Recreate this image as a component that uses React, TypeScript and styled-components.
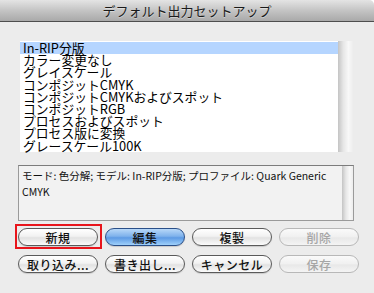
import React from "react";
import styled, { createGlobalStyle, css } from "styled-components";

const GlobalStyle = createGlobalStyle`
  html, body {
    margin: 0;
    padding: 0;
    background: #ffffff;
  }
  body {
    font-family: "Noto Sans CJK JP", "Liberation Sans", sans-serif;
  }
`;

const Window = styled.div`
  width: 374px;
  height: 293px;
  background: #ececec;
  border-radius: 0 5px 0 0;
  overflow: hidden;
  display: flex;
  flex-direction: column;
`;

const TitleBar = styled.div`
  height: 21px;
  border-bottom: 1px solid #4e4e4e;
  background: linear-gradient(#e4e4e4, #c4c4c4 50%, #a9a9a9);
  display: flex;
  align-items: center;
  justify-content: center;
  font-size: 13px;
  line-height: 21px;
  color: #1a1a1a;
  text-shadow: 0 1px 0 rgba(255, 255, 255, 0.4);
`;

const Body = styled.div`
  padding: 19px 20px 0 18px;
  display: flex;
  flex-direction: column;
`;

const ListBox = styled.div`
  margin-left: 2px;
  width: 333px;
  height: 111px;
  display: flex;
  background: #ffffff;
`;

const ListItems = styled.div`
  flex: 1;
  padding-top: 1px;
`;

const ListRow = styled.div<{ $selected?: boolean }>`
  height: 12.2px;
  line-height: 12.2px;
  padding-left: 3px;
  font-size: 12.8px;
  color: #000;
  background: ${(p) => (p.$selected ? "#b5d5ff" : "transparent")};
  white-space: nowrap;
`;

const ScrollTrack = styled.div<{ $w: number }>`
  width: ${(p) => p.$w}px;
  background: linear-gradient(90deg, #c4c4c4, #e6e6e6 35%, #f8f8f8 70%, #ededed);
`;

const InfoBox = styled.div`
  margin-top: 13px;
  width: 334px;
  height: 54px;
  border: 1px solid #9a9a9a;
  border-top-color: #7c7c7c;
  background: #f2f2f2;
  display: flex;
`;

const InfoText = styled.div`
  flex: 1;
  padding: 2px 0 0 3px;
  font-size: 10.5px;
  line-height: 16px;
  color: #111;
`;

const ButtonGrid = styled.div`
  margin-top: 7px;
  display: grid;
  grid-template-columns: repeat(4, 80px);
  column-gap: 7px;
  row-gap: 9px;
`;

type Tone = "normal" | "primary" | "disabled";

const PushButton = styled.div<{ $tone: Tone; $marked?: boolean }>`
  position: relative;
  height: 18px;
  border-radius: 9px;
  box-sizing: border-box;
  display: flex;
  align-items: center;
  justify-content: center;
  font-size: 12px;
  font-weight: 500;
  letter-spacing: 0.5px;
  border: 1px solid
    ${(p) =>
      p.$tone === "primary" ? "#2a4f88" : p.$tone === "disabled" ? "#b8b8b8" : "#5a5a5a"};
  color: ${(p) => (p.$tone === "disabled" ? "#a6a6a6" : "#111")};
  background: ${(p) =>
    p.$tone === "primary"
      ? "linear-gradient(#b8d8f8, #7fb2ec 45%, #5d9ae4 55%, #9fd0fb)"
      : p.$tone === "disabled"
      ? "linear-gradient(#fafafa, #f0f0f0 50%, #e8e8e8 55%, #f4f4f4)"
      : "linear-gradient(#ffffff, #f2f2f2 45%, #e2e2e2 55%, #fbfbfb)"};
  box-shadow: ${(p) =>
    p.$tone === "disabled" ? "none" : "0 1px 1px rgba(0, 0, 0, 0.15)"};

  ${(p) =>
    p.$marked &&
    css`
      &::after {
        content: "";
        position: absolute;
        left: -4px;
        right: -5px;
        top: -5px;
        bottom: -4px;
        border: 2px solid #e8141b;
      }
    `}
`;

const items = [
  "In-RIP分版",
  "カラー変更なし",
  "グレイスケール",
  "コンポジットCMYK",
  "コンポジットCMYKおよびスポット",
  "コンポジットRGB",
  "プロセスおよびスポット",
  "プロセス版に変換",
  "グレースケール100K",
];

const buttons: { label: string; tone: Tone; marked?: boolean }[] = [
  { label: "新規", tone: "normal", marked: true },
  { label: "編集", tone: "primary" },
  { label: "複製", tone: "normal" },
  { label: "削除", tone: "disabled" },
  { label: "取り込み...", tone: "normal" },
  { label: "書き出し...", tone: "normal" },
  { label: "キャンセル", tone: "normal" },
  { label: "保存", tone: "disabled" },
];

const App = () => {
  return (
    <>
      <GlobalStyle />
      <Window>
        <TitleBar>デフォルト出力セットアップ</TitleBar>
        <Body>
          <ListBox>
            <ListItems>
              {items.map((item, i) => (
                <ListRow key={item} $selected={i === 0}>
                  {item}
                </ListRow>
              ))}
            </ListItems>
            <ScrollTrack $w={15} />
          </ListBox>
          <InfoBox>
            <InfoText>
              モード: 色分解; モデル: In-RIP分版; プロファイル: Quark Generic
              CMYK
            </InfoText>
            <ScrollTrack $w={11} />
          </InfoBox>
          <ButtonGrid>
            {buttons.map((b) => (
              <PushButton key={b.label} $tone={b.tone} $marked={b.marked}>
                {b.label}
              </PushButton>
            ))}
          </ButtonGrid>
        </Body>
      </Window>
    </>
  );
};

export default App;
